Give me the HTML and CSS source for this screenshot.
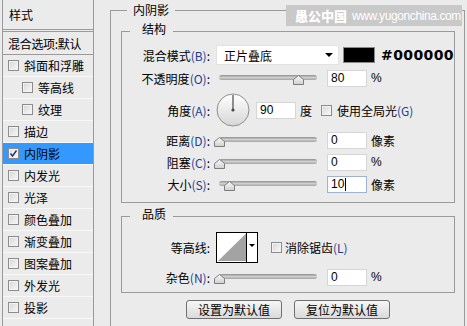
FILE: index.html
```html
<!DOCTYPE html>
<html lang="zh-CN">
<head>
  <meta charset="UTF-8">
  <title>图层样式 - 内阴影</title>
  <link rel="stylesheet" href="styles.css">
</head>
<body>
  <div class="dialog">
    <ul class="style-list">
      <li class="list-head">样式</li>
      <li class="list-blend">混合选项:默认</li>
      <li><span class="cb"></span>斜面和浮雕</li>
      <li class="sub"><span class="cb"></span>等高线</li>
      <li class="sub"><span class="cb"></span>纹理</li>
      <li><span class="cb"></span>描边</li>
      <li class="active"><span class="cb checked"><svg width="9" height="9" viewBox="0 0 9 9"><path d="M1.5 4.5 L3.5 7 L7.5 1.5" fill="none" stroke="#1e2f86" stroke-width="1.4"/></svg></span>内阴影</li>
      <li><span class="cb"></span>内发光</li>
      <li><span class="cb"></span>光泽</li>
      <li><span class="cb"></span>颜色叠加</li>
      <li><span class="cb"></span>渐变叠加</li>
      <li><span class="cb"></span>图案叠加</li>
      <li><span class="cb"></span>外发光</li>
      <li class="last"><span class="cb"></span>投影</li>
    </ul>

    <div class="main">
      <fieldset class="group outer">
        <legend>内阴影</legend>

        <fieldset class="group inner">
          <legend>结构</legend>

          <div class="row r-blend">
            <label class="lbl">混合模式<span class="key">(B)</span>:</label>
            <div class="select">正片叠底<span class="arrow"></span></div>
            <span class="swatch"></span>
            <span class="hex">#000000</span>
          </div>

          <div class="row r-opacity">
            <label class="lbl">不透明度<span class="key">(O)</span>:</label>
            <div class="slider">
              <div class="track"></div>
              <svg class="thumb" style="left: 74px" width="11" height="10" viewBox="0 0 11 10"><polygon points="0.5,9.5 0.5,4.5 5.5,0.5 10.5,4.5 10.5,9.5" fill="url(#tg)" stroke="#7d7d7d"/><defs><linearGradient id="tg" x1="0" y1="0" x2="0" y2="1"><stop offset="0" stop-color="#fafafa"/><stop offset="1" stop-color="#cfcfcf"/></linearGradient></defs></svg>
            </div>
            <div class="num">80</div>
            <span class="unit">%</span>
          </div>

          <div class="row r-angle">
            <label class="lbl">角度<span class="key">(A)</span>:</label>
            <svg class="dial" width="34" height="34" viewBox="0 0 34 34">
              <defs><linearGradient id="dg" x1="0" y1="0" x2="0" y2="1"><stop offset="0" stop-color="#ffffff"/><stop offset="1" stop-color="#d6d6d6"/></linearGradient></defs>
              <circle cx="17" cy="17" r="16" fill="url(#dg)" stroke="#8f8f8f"/>
              <line x1="17" y1="2" x2="17" y2="17" stroke="#4a4a4a" stroke-width="1.2"/>
              <circle cx="17" cy="17" r="1.6" fill="#4a4a4a"/>
            </svg>
            <div class="num">90</div>
            <span class="unit">度</span>
            <span class="cb global"></span>
            <span class="cb-text">使用全局光<span class="key">(G)</span></span>
          </div>

          <div class="row r-dist">
            <label class="lbl">距离<span class="key">(D)</span>:</label>
            <div class="slider">
              <div class="track"></div>
              <svg class="thumb" style="left: -5px" width="11" height="10" viewBox="0 0 11 10"><polygon points="0.5,9.5 0.5,4.5 5.5,0.5 10.5,4.5 10.5,9.5" fill="url(#tg)" stroke="#7d7d7d"/></svg>
            </div>
            <div class="num">0</div>
            <span class="unit">像素</span>
          </div>

          <div class="row r-choke">
            <label class="lbl">阻塞<span class="key">(C)</span>:</label>
            <div class="slider">
              <div class="track"></div>
              <svg class="thumb" style="left: -5px" width="11" height="10" viewBox="0 0 11 10"><polygon points="0.5,9.5 0.5,4.5 5.5,0.5 10.5,4.5 10.5,9.5" fill="url(#tg)" stroke="#7d7d7d"/></svg>
            </div>
            <div class="num">0</div>
            <span class="unit">%</span>
          </div>

          <div class="row r-size">
            <label class="lbl">大小<span class="key">(S)</span>:</label>
            <div class="slider">
              <div class="track"></div>
              <svg class="thumb" style="left: 5px" width="11" height="10" viewBox="0 0 11 10"><polygon points="0.5,9.5 0.5,4.5 5.5,0.5 10.5,4.5 10.5,9.5" fill="url(#tg)" stroke="#7d7d7d"/></svg>
            </div>
            <div class="num focus">10<span class="caret"></span></div>
            <span class="unit">像素</span>
          </div>
        </fieldset>

        <fieldset class="group quality">
          <legend>品质</legend>

          <div class="row r-contour">
            <label class="lbl">等高线:</label>
            <svg class="contour" width="42" height="31" viewBox="0 0 42 31">
              <rect x="0.5" y="0.5" width="41" height="30" fill="#fff" stroke="#000"/>
              <polygon points="2,29 30,1.5 30,29" fill="#a3a3a3"/>
              <line x1="30.5" y1="0" x2="30.5" y2="31" stroke="#000"/>
              <polygon points="33,12 39,12 36,15" fill="#000"/>
            </svg>
            <span class="cb aa"></span>
            <span class="cb-text">消除锯齿<span class="key">(L)</span></span>
          </div>

          <div class="row r-noise">
            <label class="lbl">杂色<span class="key">(N)</span>:</label>
            <div class="slider">
              <div class="track"></div>
              <svg class="thumb" style="left: -5px" width="11" height="10" viewBox="0 0 11 10"><polygon points="0.5,9.5 0.5,4.5 5.5,0.5 10.5,4.5 10.5,9.5" fill="url(#tg)" stroke="#7d7d7d"/></svg>
            </div>
            <div class="num">0</div>
            <span class="unit">%</span>
          </div>
        </fieldset>

        <div class="buttons">
          <button>设置为默认值</button>
          <button>复位为默认值</button>
        </div>
      </fieldset>
    </div>
  </div>

  <div class="watermark"><b>愚公中国</b>www.yugonchina.com</div>
</body>
</html>
```

FILE: styles.css
```css
* {
  box-sizing: border-box;
}

html,
body {
  height: 326px;
  overflow: hidden;
}

body {
  margin: 0;
  width: 467px;
  position: relative;
  background: #ebebeb;
  color: #000;
  font: 12px "Noto Sans CJK SC", "Liberation Sans", sans-serif;
}

.dialog {
  display: flex;
  align-items: flex-start;
  height: 326px;
}

/* left list of effects */
.style-list {
  list-style: none;
  margin: 0 0 0 2px;
  padding: 0;
  width: 92px;
  height: 326px;
  border-left: 1px solid #9a9a9a;
  border-right: 1px solid #9a9a9a;
}

.style-list li {
  height: 22px;
  display: flex;
  align-items: center;
  padding-left: 5px;
  border-bottom: 1px solid #f8f8f8;
  white-space: nowrap;
}

.style-list .list-head {
  height: 30px;
  padding-left: 6px;
  border-bottom: 1px solid #9a9a9a;
}

.style-list .list-blend {
  height: 24px;
  margin-top: 1px;
  padding-left: 5px;
  border-top: 1px solid #9a9a9a;
  border-bottom: 1px solid #9a9a9a;
  letter-spacing: -0.3px;
}

.style-list .sub {
  padding-left: 19px;
}

.style-list .active {
  background: #3399ff;
}

.cb {
  width: 11px;
  height: 11px;
  flex: none;
  margin-right: 5px;
  border: 1px solid #8c8c8c;
  background: linear-gradient(135deg, #d4d4d4, #fbfbfb);
  box-shadow: inset 0 0 0 1px #f2f2f2;
  display: flex;
  align-items: center;
  justify-content: center;
}

.cb.checked {
  background: linear-gradient(135deg, #dcdcdc, #ffffff);
}

.cb.checked svg {
  display: block;
}

/* right side */
.main {
  margin-left: 16px;
  width: 355px;
}

.group {
  margin: 0;
  border: 1px solid #9a9a9a;
  min-width: 0;
}

.group > legend {
  font-size: 12px;
}

.outer {
  margin-top: 1px;
  padding: 0 9px 0 10px;
  height: 325px;
  border-bottom: none;
}

.outer > legend {
  margin-left: 6px;
  padding: 0 6px;
  line-height: 18px;
}

.inner {
  margin-top: 3px;
  padding: 4px 0 8px 0;
}

.inner > legend,
.quality > legend {
  margin-left: 8px;
  padding: 0 7px 4px 12px;
  line-height: 14px;
}

.quality {
  margin-top: 4px;
  padding: 7px 0 6px 0;
}

.row {
  display: flex;
  align-items: center;
  height: 20px;
  white-space: nowrap;
}

.lbl {
  width: 88px;
  flex: none;
  margin-right: 6px;
  text-align: right;
}

.key {
  color: #213d92;
}

.r-blend {
  height: 22px;
}

.r-opacity {
  margin-top: 2px;
}

.r-angle {
  height: 34px;
  margin-top: 5px;
}

.r-dist {
  margin-top: 3px;
}

.r-choke,
.r-size {
  margin-top: 2px;
}

.r-contour {
  height: 31px;
}

.r-noise {
  height: 18px;
  margin-top: 5px;
}

.select {
  width: 132px;
  height: 20px;
  margin-right: 4px;
  padding-left: 7px;
  background: #fff;
  border: 1px solid #e2e2e2;
  display: flex;
  align-items: center;
}

.arrow {
  margin-left: auto;
  margin-right: 5px;
  width: 0;
  height: 0;
  border-left: 4px solid transparent;
  border-right: 4px solid transparent;
  border-top: 4px solid #000;
}

.swatch {
  width: 32px;
  height: 16px;
  flex: none;
  background: #000;
  border: 1px solid #8a8a8a;
  margin-right: 6px;
}

.hex {
  font: bold 14px "DejaVu Sans", sans-serif;
  letter-spacing: 0.4px;
}

.slider {
  position: relative;
  width: 98px;
  height: 20px;
  margin-left: 3px;
  margin-right: 10px;
  flex: none;
}

.track {
  margin-top: 7px;
  height: 5px;
  border-radius: 3px;
  background: linear-gradient(#8e8e8e, #cfcfcf 50%, #a4a4a4);
}

.thumb {
  position: absolute;
  top: 7px;
  display: block;
}

.num {
  width: 40px;
  height: 17px;
  flex: none;
  padding-left: 3px;
  background: #fff;
  border: 1px solid #d6d6d6;
  font: 12px/15px "Liberation Sans", sans-serif;
  display: flex;
  align-items: center;
}

.num.focus {
  border-color: #9fb3cf;
}

.caret {
  width: 1px;
  height: 13px;
  background: #000;
  margin-left: 1px;
}

.unit {
  margin-left: 4px;
  font-family: "Liberation Sans", "Noto Sans CJK SC", sans-serif;
}

.dial {
  display: block;
  margin-right: 6px;
  flex: none;
}

.cb.global {
  margin-left: 9px;
}

.contour {
  display: block;
  flex: none;
}

.cb.aa {
  margin-left: 13px;
  margin-right: 3px;
}

.buttons {
  display: flex;
  justify-content: center;
  gap: 12px;
  margin-top: 7px;
}

.buttons button {
  width: 96px;
  height: 19px;
  padding: 0;
  border: 1px solid #707070;
  border-radius: 3px;
  background: linear-gradient(#f6f6f6, #dadada);
  font: 12px/17px "Noto Sans CJK SC", sans-serif;
  color: #000;
}

/* site watermark lying over the dialog */
.watermark {
  position: absolute;
  left: 286px;
  top: 5px;
  width: 176px;
  height: 21px;
  background: #c9c9c9;
  color: #fff;
  display: flex;
  align-items: center;
  padding-left: 9px;
  font: 12px "Liberation Sans", sans-serif;
  letter-spacing: -0.4px;
  white-space: nowrap;
}

.watermark b {
  font: 900 13px "Noto Sans CJK SC", sans-serif;
  letter-spacing: 0;
  margin-right: 5px;
}
```
